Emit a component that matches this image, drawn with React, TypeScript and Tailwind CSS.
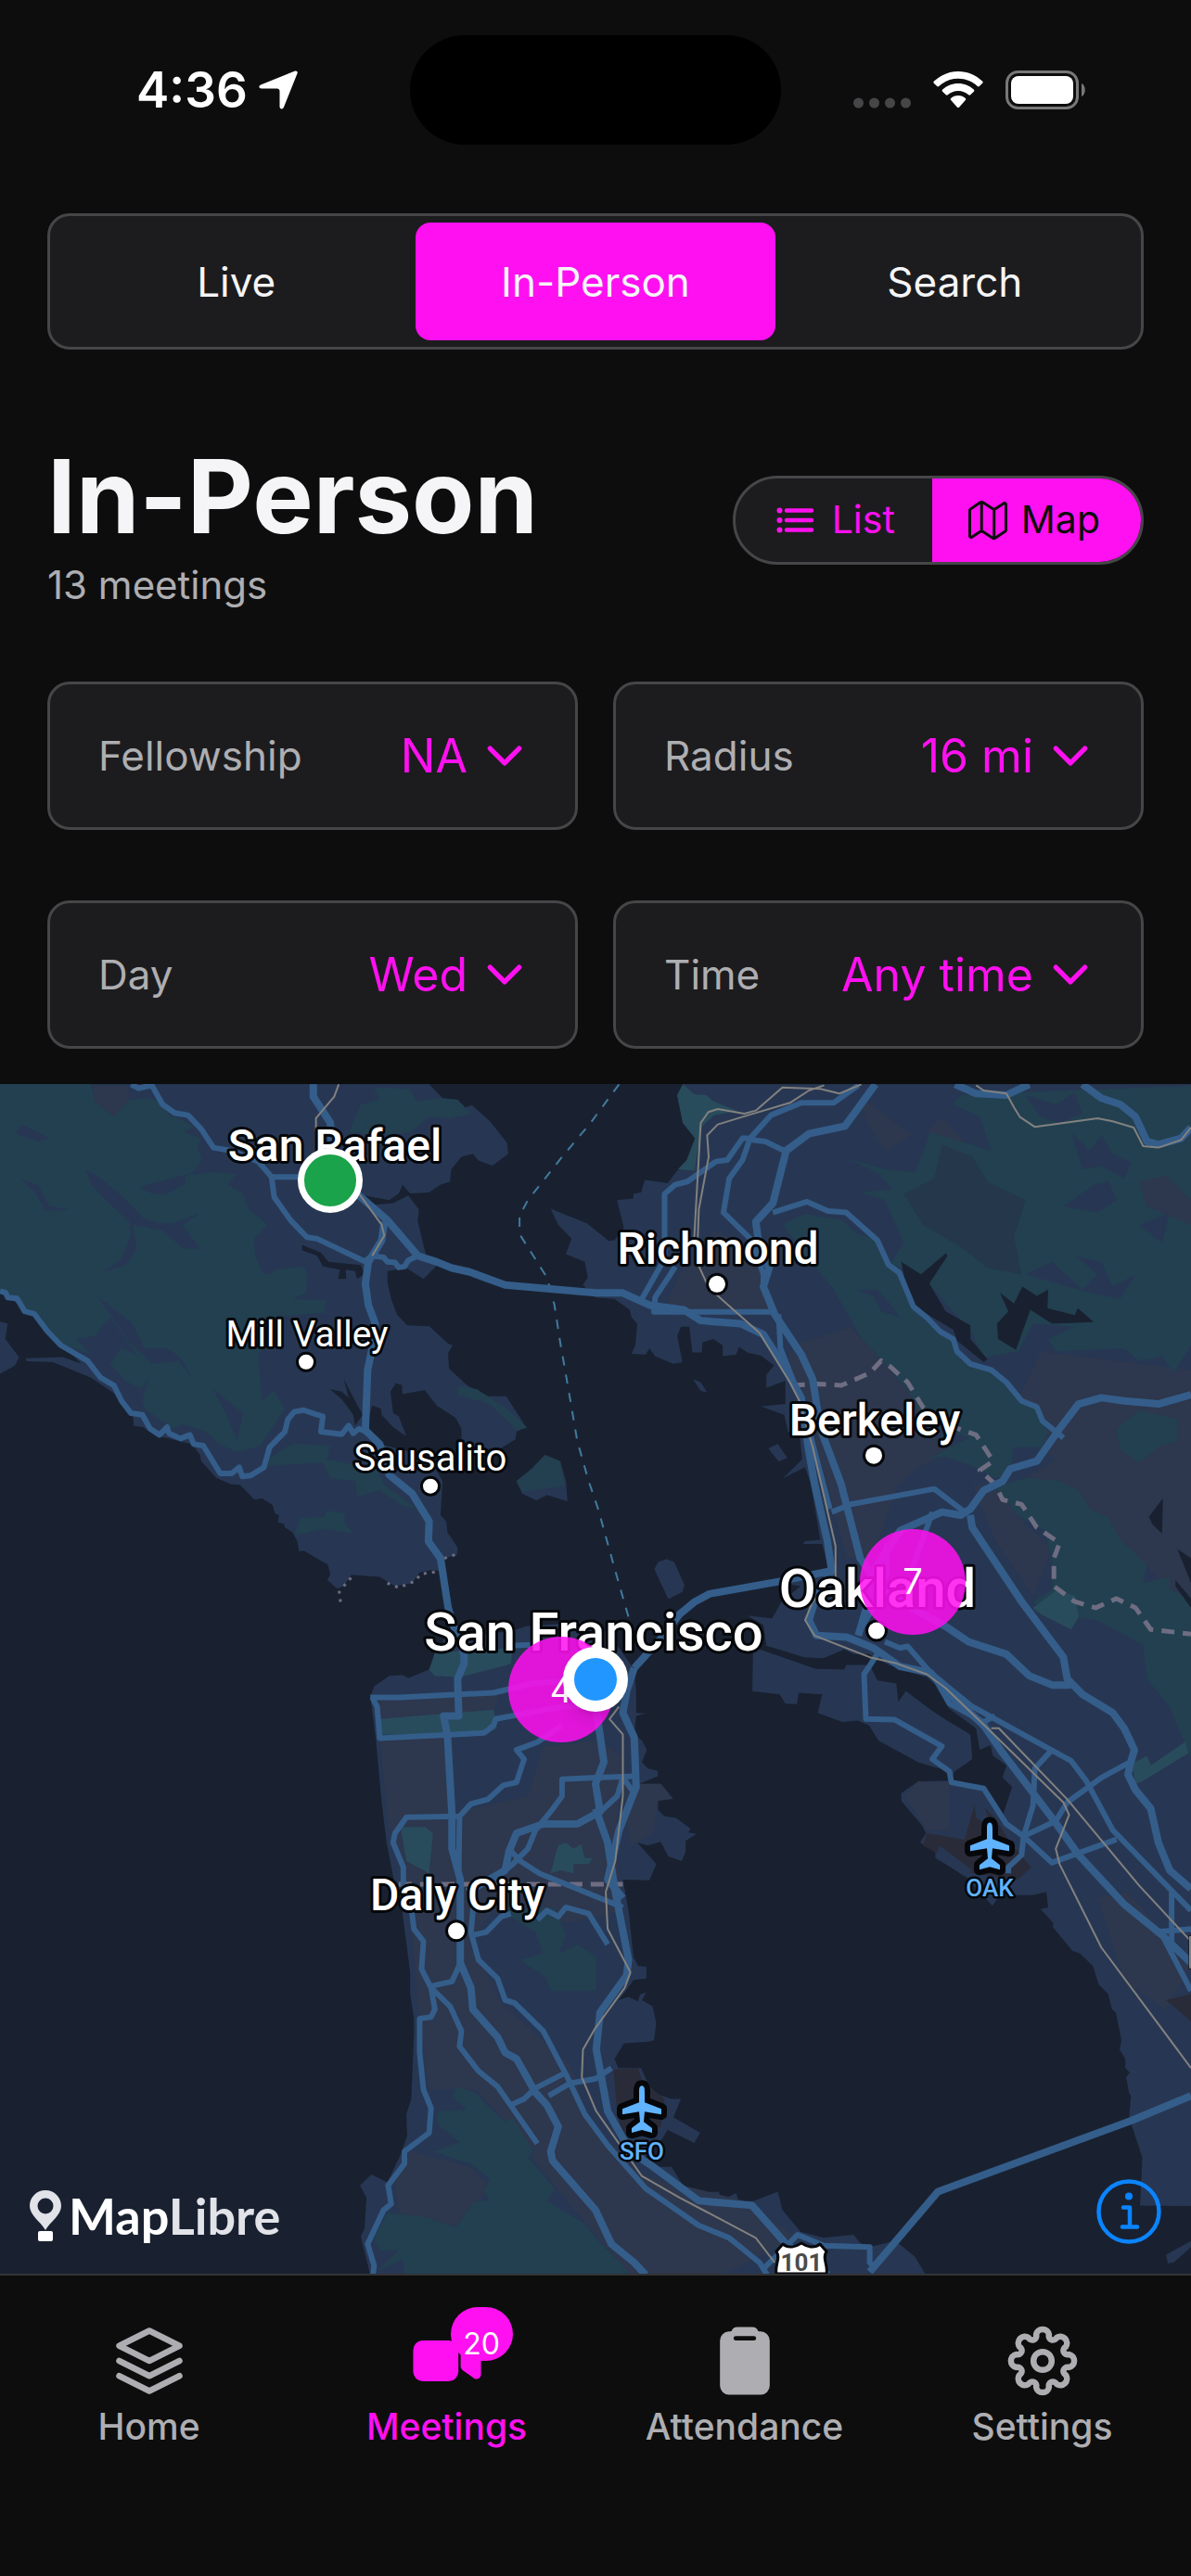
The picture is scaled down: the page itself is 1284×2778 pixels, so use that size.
import { useState } from 'react';
import { FiLayers } from 'react-icons/fi';
import { IoChevronDown, IoClipboard, IoList, IoMapOutline, IoVideocam } from 'react-icons/io5';

// map drawing units, labels and pins share them
const MAP_SIZE = 1284;

const LAND = [
  // Marin
  'M0 25H1130L1165 70L1205 75L1225 100L1242 92L1290 145L1335 215L1338 250L1297 288L1260 272L1245 250L1215 260L1188 300L1185 340L1160 350L1130 375L1080 378L1060 350L1050 378L1025 400L960 385L985 415L1035 410L1075 385L1103 430L1100 470L1122 580L1160 600L1115 655L1070 620L1020 630L1020 665L1030 720L1045 770L1072 805L1130 808L1180 865L1192 870L1180 895L1182 945L1230 1000L1285 1035L1333 1035L1385 1135L1360 1150L1357 1175L1310 1210L1215 1190L1215 1140L1200 1105L1150 1065L1118 1015L1060 1028L1058 998L1042 993L1028 1020L1035 1090L1050 1100L1070 1165L1035 1135L1005 1095L1003 1075L980 1065L965 1130L1000 1190L1130 1230L1165 1310L1160 1420L1175 1440L1178 1475L1205 1525L1203 1550L1165 1560L1160 1600L1135 1598L1105 1605L1085 1640L1040 1650L1000 1620L925 1613L905 1650L888 1658L862 1630L870 1612L863 1580L800 1535L787 1537L783 1505L770 1475L750 1460L748 1448L732 1443L735 1420L724 1415L718 1388L690 1365L670 1370L632 1322L610 1320L570 1300L530 1245L527 1225L505 1190L420 1165L375 1135L352 1130L350 1100L320 1060L300 1025L240 975L140 925L70 922L68 912L165 908L215 930L160 865L90 765L50 740L0 690Z',
  'M0 793L20 800L14 850L50 908L40 935L0 962Z',
  // Angel Island, Yerba Buena
  'M1360 1310L1400 1270L1435 1225L1475 1245L1490 1310L1494 1375L1440 1355L1412 1372L1375 1350Z',
  'M1723 1595L1733 1572L1755 1562L1775 1572L1802 1645L1797 1668L1760 1692Z',
  // East Bay
  'M1798 25L1783 60L1798 150L1830 200L1808 290L1783 305L1758 345L1698 335L1688 375L1668 380L1668 395L1625 400L1643 490L1618 530L1603 532L1545 475L1450 428L1470 480L1505 525L1490 575L1540 600L1548 650L1535 675L1568 715L1618 720L1658 755L1663 780L1678 800L1673 870L1663 898L1700 900L1710 880L1725 905L1773 930L1797 925L1783 840L1793 810L1815 810L1823 893L1848 893L1850 860L1878 850L1903 870L1903 905L1938 900L1946 875L1970 895L2003 903L2038 935L2018 965L2018 1008L2068 985L2068 1060L2004 1068L2065 1095L2075 1150L2105 1150L2112 1240L2062 1300L2120 1265L2135 1320L2160 1500L2118 1505L2115 1513L2165 1513L2180 1590L2058 1640L2108 1650L2058 1700L2033 1755L1968 1745L2010 1775L2018 1840L1983 1860L1981 1990L2053 2000L2068 2030L2098 2032L2103 1995L2165 2000L2153 2060L2218 2090L2258 2085L2288 2100L2313 2150L2418 2220L2500 2250L2500 2280L2418 2282L2373 2320L2373 2345L2428 2425L2438 2450L2423 2480L2463 2510L2463 2530L2543 2590L2613 2685L2633 2650L2718 2650L2755 2640L2760 2690L2740 2695L2773 2740L2773 2755L2823 2830L2845 2840L2878 2880L2893 2940L2918 2970L2928 3020L2938 3030L2953 3120L2948 3150L2963 3180L2963 3210L2975 3225L2965 3240L2973 3290L2978 3300L2973 3370L3008 3500L3002 3655L3136 3657V25Z',
  'M3070 3815L3136 3770V3790L3090 3840L3075 3842Z',
  'M1825 980L1845 990L1862 1022L1845 1018Z',
  'M2023 1203L2048 1190L2073 1235L2050 1246Z',
  // San Francisco and the peninsula
  'M975 2010L985 1975L1025 1940L1060 1938L1075 1948L1130 1920L1150 1865L1170 1820L1350 1795L1385 1780L1500 1770L1568 1760L1630 1850L1670 1920L1675 1990L1675 2060L1700 2062L1675 2070L1670 2130L1690 2150L1703 2180L1690 2220L1705 2240L1732 2248V2265L1683 2290H1740L1772 2338L1733 2345V2375L1750 2395L1780 2400L1818 2435L1813 2448L1834 2452L1805 2475V2510L1795 2540L1760 2525L1740 2478L1705 2490L1678 2480L1728 2550L1710 2602L1640 2600L1655 2700L1668 2850L1680 2880L1702 2882V2920L1668 2925L1648 2960L1628 2990L1655 2980L1680 2995L1685 2972L1702 2965L1690 2990L1718 3010L1728 3065L1722 3120L1708 3125L1643 3130L1618 3180L1628 3210L1688 3210L1695 3230L1718 3290L1768 3310L1793 3310L1773 3370L1843 3420L1828 3452L1758 3410L1743 3440L1698 3500L1718 3530L1768 3530L1798 3590L1818 3615L1893 3610L1898 3640L1938 3615L1945 3640L1985 3640L2048 3610L2060 3670L2108 3740L2168 3760L2248 3750L2263 3775L2288 3790L2358 3770L2408 3820L2438 3880H975L950 3755L960 3730L965 3630L948 3590L978 3555L1020 3580L1055 3490L1072 3430L1070 3360L1083 3310L1090 3100L1090 3050L1080 2970L1080 2900L1060 2710L1040 2620L1018 2480L1005 2350L990 2150L980 2050Z',
];

const PARKS = [
  'M0 25H240L250 80L300 125L340 75L400 70L445 95L440 120L512 160L485 180L528 200L520 230L532 270L510 310L365 358L440 380L485 350L490 320L560 310L622 315L600 350L640 380L655 430L705 480L668 525L670 570L690 635L715 640L725 625L800 615L810 640L805 700L770 720L860 725L855 765L740 775L720 840L680 900L690 1050L720 1015L750 1075L715 1140L685 1195L625 1215L575 1190L545 1150L480 1125L455 1140L385 1080L375 1050L395 960L360 900L290 780L250 840L200 850L240 900L160 865L90 765L50 740L0 690Z',
  'M290 930L320 880L360 900L400 965L370 1010L330 985Z',
  'M920 180L950 90L1000 75L985 35L1080 40L1095 80L1160 70L1205 75L1240 120L1180 135L1130 130L1080 180L1000 190Z',
  'M1205 1000L1255 1012L1340 1080L1388 1137L1360 1145L1290 1060L1205 1030Z',
  'M710 1235L770 1190L870 1195L860 1240L990 1270L1010 1320L1100 1400L1060 1390L1000 1340L940 1360L935 1310L870 1300L850 1250L705 1260Z',
  'M790 1430L855 1425L858 1405L910 1415L905 1440L932 1480L850 1465L775 1485Z',
  'M1360 1310L1400 1270L1435 1225L1475 1245L1485 1325L1375 1345Z',
  // Tilden and the hills
  'M2060 480L2120 445L2218 465L2258 510L2313 530L2335 605L2368 640L2395 740L2470 830L2510 855L2530 920L2620 950L2640 990L2725 1080L2760 1150L2748 1200L2670 1200L2660 1290L2620 1300L2560 1260L2488 1230L2440 1240L2550 1170L2430 1120L2393 1020L2323 920L2270 850L2195 690L2130 590Z',
  'M2228 265L2330 300L2410 310L2450 180L2610 240L2580 130L2510 90L2530 60L2700 50L3136 30V870L3090 960L3060 905L3000 920L2960 880L2780 890L2760 850L2830 810L2720 800L2680 890L2590 910L2560 830L2480 720L2430 650L2345 605L2380 540L2330 400L2265 375L2350 365L2310 310Z',
  'M2620 1330L2700 1300L2790 1310L2840 1340L2870 1400L2920 1430L2950 1500L3020 1580L3010 1640L3080 1620L3080 1660L3136 1690V2200L3120 2160L3080 2040L3020 1950L3010 1840L2890 1760L2760 1740L2720 1700L2770 1660L2770 1560L2750 1470L2680 1420Z',
  'M2940 1140L3000 1080L3100 1110L3100 1180L3050 1200L3000 1250L2950 1210Z',
  // peninsula
  'M1190 3300L1205 3270L1250 3290L1290 3340L1330 3385L1350 3370L1405 3480L1390 3500L1460 3600L1440 3640L1540 3715L1568 3760L1640 3850L1660 3880H1065L1060 3830L990 3870L1050 3800L1000 3800L985 3760L1020 3680L1110 3690L1200 3725L1250 3640L1290 3640L1275 3610L1290 3570L1240 3520L1090 3460L1145 3480L1210 3450L1150 3390L1155 3350L1230 3345Z',
  'M1320 2700L1460 2690L1490 2780L1470 2840L1520 2810L1570 2850V2960L1450 2960L1440 2920L1370 2860L1430 2840L1410 2770Z',
];

const PARKS_LIGHT = [
  'M1798 25L1828 58L1860 60L1878 80L1940 110L1880 125L1850 160L1835 250L1830 305L1785 300L1808 270L1830 200L1798 150L1783 60Z',
  'M1145 1865L1350 1850L1345 1902L1210 1945L1145 1940L1130 1920Z',
  'M1000 2080L1300 2050L1308 2110L1280 2130L1003 2130Z',
  'M1055 2430L1120 2430L1140 2450L1130 2580L1070 2540Z',
  'M1470 2490L1490 2480L1510 2500L1530 2485L1540 2530L1560 2530L1550 2550L1510 2550L1510 2580L1475 2570L1450 2580L1460 2530Z',
  'M2720 1720L2780 1665L2830 1680L2840 1750L2820 1790L2740 1740Z',
  'M2980 2225L3020 2200L3030 2230L3120 2155L3130 2190L3010 2280L2990 2290Z',
];

const URBAN = [
  'M2090 870L2240 810L2330 930L2400 1030L2440 1150L2520 1200L2400 1280L2360 1330L2300 1550L2230 1560L2170 1280L2120 1100L2060 950Z',
  'M1740 770L1800 620L1880 500L1960 540L2010 640L2030 770Z',
  'M2650 1130L2740 890L3136 950V1800L3040 1610L2940 1500L2850 1370L2700 1300L2780 1240Z',
  'M2260 60L2400 190L2330 240L2280 140Z',
  'M2480 130L2540 210L2520 220L2440 180Z',
  'M2560 1320L2620 1330L2700 1450L2770 1530L2720 1680L2620 1500Z',
  'M2380 2330L2418 2282L2500 2285L2500 2440L2440 2440Z',
  'M2890 2660L2970 2640L3136 2880L3070 3020L2960 2930Z',
  'M1000 2010L1320 1990L1300 2050L1000 2080Z',
  'M1000 2140L1190 2140L1200 2380L1390 2330L1430 2170L1568 2150L1640 2200L1620 2480L1640 2700L1500 2740L1300 2700L1240 2800L1320 3000L1500 3200L1560 3400L1700 3560L1960 3640L2100 3760L1900 3880H1660L1560 3740L1400 3500L1330 3380L1250 3280L1130 3280L1100 3000L1080 2700L1020 2400Z',
  'M1080 3480L1240 3530L1290 3600L1200 3720L1050 3680L1040 3580Z',
  'M1640 2290H1740L1772 2338L1733 2345L1720 2450L1660 2490Z',
];

const WATER = [
  'M795 545L845 570L865 600L950 610L960 640L940 655L935 630L910 625L912 655L890 655L895 625L850 615L835 580L795 562Z',
  'M868 1012L900 1020L918 1040L905 978L935 1050L955 1095L935 1130L930 1095L900 1045Z',
  'M1983 1860L1985 1848L2148 1918L2223 1920L2228 1905L2290 1905L2310 1955L2360 1965L2365 2025L2385 1990L2450 2050L2500 2090L2555 2130L2560 2210L2513 2250L2503 2285L2568 2295L2600 2330L2640 2395L2665 2300L2640 2270L2650 2230L2615 2200L2608 2165L2580 2180L2570 2110L2498 2045L2465 1970L2440 1945L2340 1905L2288 1870L2248 1870L2223 1855L2168 1883L2118 1880L1998 1835Z',
  'M2373 600L2425 640L2490 573L2495 580L2447 670L2490 760L2555 805L2555 850L2600 915L2590 925L2520 855L2510 820L2395 735Z',
  'M2633 700L2670 735L2692 680L2730 710L2760 690L2758 750L2830 772L2838 750L2880 795L2770 800L2713 755L2675 885L2628 850L2625 800L2655 760Z',
  'M3062 1365L3025 1425L3035 1450L3060 1480ZM3100 1530L3136 1560V1640L3120 1590ZM3095 1630L3136 1690V1720L3095 1650Z',
];

const AIRFIELD = [
  'M2570 2340L2620 2400L2660 2480L2715 2560L2680 2600L2560 2580L2430 2490L2440 2450L2540 2470Z',
  'M1615 3215L1680 3210L1690 3250L1750 3310L1740 3400L1640 3440L1625 3350Z',
  'M3070 2990L3136 2970V3060L3090 3010Z',
];

const HIGHWAYS = [
  'M825 25L825 65L870 150L875 260L945 385L1020 465L1100 580L1150 600L1190 620L1235 632L1330 675L1568 700H1638L1710 740L1800 755L1845 790L1950 800L2010 835L2060 930L2110 1040L2128 1200L2145 1320L2178 1500L2190 1600',
  'M1012 470L1005 530L970 600L962 670L970 740L988 800L980 880L968 950L962 1145L1000 1190L1025 1290L1085 1350L1130 1440L1128 1505L1160 1560L1180 1720L1200 1800L1222 1870V1900L1205 1950L1208 2070H1168L1178 2130L1190 2390V2500L1212 2600L1212 2870L1240 2950L1245 3020L1310 3110L1330 3160L1360 3180L1410 3290L1440 3330L1470 3400L1450 3480L1455 3510L1568 3670L1610 3780L1670 3840L1700 3880',
  'M2305 25L2225 160L2130 185L2070 240L2035 410L1990 470L2000 560L2025 620L2010 680L2040 770L2110 900L2140 980L2160 1140L2215 1320L2265 1560L2300 1620',
  'M2515 25L2570 55L2650 60L2710 25',
  'M2850 25L2900 70L2950 90L2990 130L3020 210L3050 220L3110 200L3136 165',
  'M3136 1030L3050 1060L2960 1050L2900 1040L2840 1060L2790 1140L2730 1245L2660 1270L2640 1310L2590 1340L2555 1400L2530 1420L2480 1410L2370 1470L2300 1600',
  'M2555 1420L2560 1460L2690 1700L2800 1880L2810 1950L2850 2000L2930 2060L2960 2110L2987 2180L2975 2230L2970 2260L2990 2310L3030 2370L3050 2480L3080 2570L3136 2630',
  'M1670 1915L1740 1820L1790 1740L1830 1700L1868 1675L2050 1635L2190 1600L2150 1680L2130 1760L2150 1810L2230 1815L2300 1850L2370 1910L2450 1930L2500 2000L2590 2100L2640 2190L2770 2400L2840 2520L2960 2680L3060 2780L3136 2870',
  'M2260 1810L2300 1640L2400 1720L2490 1780L2550 1830L2650 1870L2710 1940L2770 1970H2820',
  'M1670 1915L1650 1990L1640 2060L1670 2140L1675 2300L1630 2440L1600 2600L1640 2660',
  'M1500 2000L1568 2030L1590 2220L1568 2290L1580 2380L1520 2420L1430 2420L1360 2450L1340 2510L1330 2570L1260 2620L1230 2640',
  'M1568 2370L1600 2480L1620 2640L1655 2860L1650 2910L1580 3030L1570 3150L1600 3350L1660 3480L1720 3530L1840 3640L1980 3655L2070 3780L2180 3880',
  'M3136 3300L2980 3380L2470 3610L2290 3870',
];

const ROADS = [
  'M345 25L365 38L400 28L412 55L428 90L460 118L495 125L530 170L562 230L610 240L680 275L715 325L722 390L765 465L808 520L835 525L960 598L980 580L1010 585L1020 600L1040 602L1050 618L1065 615L1075 595L1100 580',
  'M715 325H790',
  'M0 695L15 700L20 715L45 718L65 760L90 768L125 825L160 870L230 920L265 975L300 1000L320 1050L345 1090L375 1095L395 1140L420 1160L440 1135L445 1155L475 1172L500 1160L510 1190L535 1195L580 1285L610 1285L630 1265L638 1295L660 1292L695 1265L710 1200L750 1150L758 1110L775 1085L800 1080L835 1095L850 1100L845 1150L900 1158L918 1130L930 1155L945 1140L965 1150',
  'M2260 28L2195 85L2110 85L2030 125L1975 200L1955 270L1920 330L1905 440L1980 530L2010 640L2010 690',
  'M1980 205L2015 210L2065 240L2130 185',
  'M1970 200L1955 200L1915 270L1885 275L1810 340L1778 350L1750 380L1750 590L1690 720',
  'M1778 615L1760 650L1725 715L1722 762H2040',
  'M2035 440L2125 405L2180 435L2228 440L2310 530L2340 610L2368 635L2405 745L2440 780L2475 825L2510 850L2520 890L2555 930L2610 950L2650 990L2690 1050L2730 1070L2745 1115L2800 1170',
  'M2050 770L2055 880L2110 1050L2185 1400',
  'M2190 1410L2240 1385L2460 1335L2540 1410',
  'M2335 1510L2335 1610L2300 1720L2260 1800',
  'M2455 1410L2400 1600',
  'M2310 1870L2275 1935L2280 2080L2355 2082L2480 2168L2455 2210L2500 2250L2505 2285L2590 2305L2650 2420L2695 2460L2690 2520L2655 2560V2580',
  'M2330 1830L2370 1850L2390 1845L2450 1930L2560 2040L2820 2215L2860 2280L2930 2440L3136 2700',
  'M2770 2180L2725 2240L2720 2360L2695 2460L2770 2545L2940 2470',
  'M2695 2460L2780 2410L2810 2350L2900 2270L2975 2220',
  'M2465 1955L2500 2030L2590 2090M2590 2090L2620 2070M3085 2640V2800M3040 2770L3136 2760M3060 2780L3136 2960',
  'M1355 1842L1400 1840M975 2010L1055 2010L1300 1995L1400 1965L1568 1950M980 2010L993 2040L1000 2142L1275 2125L1300 2100L1305 2080L1480 2040L1600 2040',
  'M1480 2100L1415 2155L1360 2180L1380 2210L1360 2285L1325 2295L1285 2340L1240 2355L1210 2395L1070 2398L1040 2450L1035 2480L1062 2560V2640L1085 2710L1090 2760L1115 2800L1110 2890L1135 2950L1145 3020L1135 3045L1105 3050L1105 3160L1115 3280L1135 3340L1130 3420L1065 3480V3520L1022 3590L1030 3650L1010 3670L968 3780L985 3850L982 3880',
  'M1210 2395L1208 2570M1340 2500L1370 2540L1420 2580L1500 2620L1640 2690M1300 2600L1350 2550L1390 2500L1410 2440L1450 2380L1480 2330V2275L1568 2270L1675 2265',
  'M1568 2395L1625 2330L1640 2270L1670 2320',
  'M1250 2640L1240 2770L1260 2860L1310 2920L1330 2990L1355 3000L1430 3090L1490 3230L1540 3360L1600 3460L1700 3600L1840 3720L1920 3760L2000 3840L2020 3880',
  'M1245 2780L1280 2770L1320 2720L1345 2710M1415 2730L1440 2700L1470 2720L1490 2690L1550 2710L1600 2810',
  'M1135 2950L1185 3010L1215 3090L1210 3140L1260 3220L1310 3270L1415 3455M1345 3330L1380 3310L1410 3275L1490 3225M1445 3300L1500 3260L1568 3245L1610 3210M1135 2945L1190 2930L1212 2870',
  'M2010 3860L2060 3800L2100 3750L2170 3785L2290 3790V3840L2305 3860',
];

const RAILS = [
  'M892 25L880 65L832 135V175L910 320L1005 480L1012 515L980 580',
  'M2570 28L2590 45L2650 55L2670 100L2685 130L2725 163L2890 135L2930 145L2985 165L3010 225L3050 230L3110 205L3136 165',
  'M2268 25L2210 55L2160 40L2060 35L1990 110L1960 120L1890 105L1865 115L1845 150L1828 520',
  'M2170 28L2130 45L2080 85L1970 125L1890 155L1862 190L1866 260L1840 430L1835 600L1865 680L1895 715L2000 830L2080 990L2105 1050L2140 1200L2200 1520L2200 1620L2140 1700L2120 1760L2145 1810L2290 1880L2360 1900L2440 1935L2490 1980L2600 2110L2800 2350L2815 2390L2780 2500L2790 2550L2900 2820L3136 3210',
  'M2610 2110L2630 2110L2810 2340L3000 2620L3136 2800',
  'M1630 2040L1605 2080L1640 2130L1640 2330L1620 2540L1595 2640L1600 2760L1660 2900L1645 2950L1568 3080L1535 3150L1532 3240L1570 3350L1690 3560L1790 3630L1990 3760L2040 3840',
];

const BORDERS = [
  'M2085 1000L2150 995L2215 1000L2290 960L2320 920L2345 940L2390 990L2430 1070L2500 1130L2570 1160L2615 1245L2580 1275L2620 1320L2640 1370L2690 1385L2730 1460L2790 1510L2775 1560V1650L2830 1700L2885 1720L2940 1690L2990 1720L3030 1790L3136 1805',
  'M1050 2615H1640',
];

// bits of boundary along the Marin headlands
const SHORE_BORDERS = ['M893 1665L897 1705M905 1650L925 1622M1020 1640L1050 1655L1090 1635L1110 1610L1150 1603M1170 1560L1205 1545'];

const CITIES = [
  { name: 'San Rafael', x: 361, y: 83, size: 48, weight: 500 },
  { name: 'Richmond', x: 774, y: 194, size: 48, weight: 500, dot: [773, 216, 9] },
  { name: 'Mill Valley', x: 331, y: 283, size: 39, weight: 400, dot: [330, 300, 8] },
  { name: 'Sausalito', x: 464, y: 417, size: 40, weight: 400, dot: [464, 434, 8] },
  { name: 'Berkeley', x: 943, y: 379, size: 48, weight: 500, dot: [942, 401, 9] },
  { name: 'Oakland', x: 946, y: 564, size: 58, weight: 500, dot: [945, 590, 9] },
  { name: 'San Francisco', x: 640, y: 611, size: 58, weight: 500 },
  { name: 'Daly City', x: 493, y: 892, size: 48, weight: 500, dot: [492, 914, 9] },
];

const AIRPORTS = [
  { code: 'OAK', x: 1067, y: 823 },
  { code: 'SFO', x: 692, y: 1107 },
];

const PLANE =
  'M0 -26C3 -26 3 -22 3 -19V-8L21 -1V5L3 2L2 13L11 20V25L0 22L-11 25V20L-2 13L-3 2L-21 5V-1L-3 -8V-19C-3 -22 -3 -26 0 -26Z';

type Filter = { id: string; label: string; options: string[] };

const FILTERS: Filter[] = [
  { id: 'fellowship', label: 'Fellowship', options: ['NA', 'AA'] },
  { id: 'radius', label: 'Radius', options: ['16 mi', '32 mi'] },
  { id: 'day', label: 'Day', options: ['Wed', 'Thu'] },
  { id: 'time', label: 'Time', options: ['Any time', 'Morning'] },
];

const MODES = ['Live', 'In-Person', 'Search'];

function Shapes({ paths, className }: { paths: string[]; className: string }) {
  return (
    <g className={className}>
      {paths.map((d) => (
        <path key={d} d={d} vectorEffect="non-scaling-stroke" />
      ))}
    </g>
  );
}

function polar(deg: number, r: number) {
  const a = (deg * Math.PI) / 180;
  return `${(39 + r * Math.cos(a)).toFixed(2)} ${(39 + r * Math.sin(a)).toFixed(2)}`;
}

// eight round teeth joined by round valleys
const GEAR =
  `M${polar(-13.8, 29)}` +
  [0, 45, 90, 135, 180, 225, 270, 315]
    .map((a) => `A7 7 0 0 1 ${polar(a + 13.8, 29)}A4.4 4.4 0 0 0 ${polar(a + 31.2, 29)}`)
    .join('') +
  'Z';

function GearIcon() {
  return (
    <svg viewBox="0 0 78 78" className="size-[78px]" fill="none" stroke="currentColor" strokeWidth="6.500" strokeLinejoin="round" aria-hidden>
      <path d={GEAR} />
      <circle cx="39" cy="39" r="9.800" />
    </svg>
  );
}

function BayMap() {
  return (
    <svg viewBox="0 0 1284 1284" preserveAspectRatio="none" className="absolute inset-0 w-full h-full" aria-hidden>
      {/* traced in a 3136 x 3852 grid */}
      <g transform="matrix(0.40944 0 0 0.33333 0 -8)" strokeLinejoin="round" strokeLinecap="butt">
        <Shapes paths={LAND} className="fill-[#273753]" />
        <Shapes paths={URBAN} className="fill-[#2d374d]" />
        <Shapes paths={PARKS} className="fill-[#224050]" />
        <Shapes paths={PARKS_LIGHT} className="fill-[#294c5c]" />
        <g className="fill-[#273753]">
          <path d="M225 300L265 330L320 385L380 460L420 475L455 475L530 440L480 480L530 560L480 555L430 500L350 480L360 560L330 610L270 635L320 590L345 510L340 470L270 390L240 350Z" />
          <path d="M40 180L60 155L130 200L100 210L50 190ZM100 350L130 420L190 430L120 435L95 380L0 265L60 335ZM255 710L350 800L380 880L440 880L475 910L510 980L470 920L400 930L340 860Z" />
          <path d="M560 1010L640 1090L625 1180L590 1080ZM370 365L470 345L440 380L400 378Z" />
          <path d="M2210 640L2260 690L2310 690L2340 730L2370 780L2320 760L2300 710L2270 700Z" />
          <path d="M2820 180L2870 240L2900 190L2930 250L2980 280L2960 330L2900 290L2850 300ZM2700 640L2770 600L2850 690L2890 640L2830 580L2900 600L2930 680L2990 640L2950 720L2870 700Z" />
          <path d="M2700 60L2780 90L2830 50L2850 120L2790 150L2740 130ZM2880 350L2920 340L2940 400L2890 440L2800 420ZM3000 480L3080 440L3060 540Z" />
        </g>
        <path className="fill-[#24374b]" d="M2380 380L2460 330L2480 220L2560 260L2600 340L2700 400L2670 520L2690 640L2600 620L2540 560L2430 480Z" />
        <path className="fill-[#2d374d]" d="M245 30H330L345 70L300 130L250 80ZM3000 340L3070 320L3136 400V480L3020 420Z" />
        <Shapes paths={WATER} className="fill-[#192130]" />
        <Shapes paths={AIRFIELD} className="fill-[#2a2b38]" />
        <path className="fill-[#273753]" d="M1745 3370L1773 3370L1843 3420L1828 3452L1758 3410ZM2475 2490L2560 2570L2540 2590L2463 2525ZM2565 2340L2585 2340L2610 2430L2570 2400Z" />
        <Shapes paths={BORDERS} className="fill-none stroke-[#6e6d82] stroke-[5px] [stroke-dasharray:14_9]" />
        <Shapes paths={SHORE_BORDERS} className="fill-none stroke-[#6e6d82] stroke-[3px] [stroke-dasharray:3_6]" />
        <path
          d="M1630 25L1555 150L1480 260L1390 400L1368 450L1368 510L1440 650L1460 740L1475 860L1495 1000L1520 1180L1550 1310L1575 1400L1620 1600L1655 1750"
          vectorEffect="non-scaling-stroke"
          className="fill-none stroke-[#427a9f] stroke-2 [stroke-dasharray:10_10]"
        />
        <Shapes paths={ROADS} className="fill-none stroke-[#345d8a] stroke-[6px]" />
        <Shapes paths={HIGHWAYS} className="fill-none stroke-[#345d8a] stroke-[8px]" />
        <Shapes paths={RAILS} className="fill-none stroke-[#82817f] stroke-2" />
      </g>

      <g textAnchor="middle" className="font-[Roboto,sans-serif]" strokeLinejoin="round">
        {CITIES.map((c) => (
          <g key={c.name} fill="white" stroke="#05070a" strokeWidth="6" paintOrder="stroke">
            {c.dot && <circle cx={c.dot[0]} cy={c.dot[1]} r={c.dot[2]} />}
            <text x={c.x} y={c.y} fontSize={c.size} fontWeight={c.weight}>
              {c.name}
            </text>
          </g>
        ))}
        {AIRPORTS.map((a) => (
          <g key={a.code} transform={`translate(${a.x} ${a.y})`} fill="#60b3ff" stroke="#05070a" paintOrder="stroke">
            <path d={PLANE} strokeWidth="12" />
            <text y="54" fontSize="26" fontWeight="500" strokeWidth="5">
              {a.code}
            </text>
          </g>
        ))}
        <path
          d="M844 1252C850 1257 858 1255 864 1251C870 1255 878 1257 884 1252L891 1260C886 1268 893 1274 891 1284H837C835 1274 842 1268 837 1260Z"
          fill="white"
          stroke="#05070a"
          strokeWidth="3"
        />
        <text x="864" y="1281" fontSize="26" fontWeight="700" fill="#4b4b4b">
          101
        </text>
        <path d="M1282 919H1284V955H1282Z" fill="white" stroke="#05070a" strokeWidth="1" />
      </g>
    </svg>
  );
}

function Pin({ x, y, label, className, children }: { x: number; y: number; label: string; className: string; children?: string }) {
  return (
    <button
      aria-label={label}
      className={`absolute -translate-1/2 rounded-full ${className}`}
      style={{ left: `${(x / MAP_SIZE) * 100}%`, top: `${(y / MAP_SIZE) * 100}%` }}
    >
      {children}
    </button>
  );
}

function StatusBar() {
  return (
    <div className="grid grid-cols-[1fr_400px_1fr] items-center pt-[38px]">
      <div className="flex items-center gap-3 pl-[147px] text-white">
        <span className="text-[53px] leading-[60px] font-semibold">4:36</span>
        <svg width="42" height="42" viewBox="0 0 42 42" aria-hidden>
          <path d="M38.500 .8C40.800-.4 42.400 1.200 41.400 3.500L27 39.500C26 42.300 22.500 42 22.500 39V22.500Q22.500 19.500 19.500 19.500H3C0 19.500-.5 16.500 2 15.500Z" fill="white" />
        </svg>
      </div>
      <div className="h-[118px] rounded-full bg-black" />
      <div className="flex items-center justify-end gap-6 pr-28">
        <svg width="62" height="42" viewBox="0 0 62 42" fill="#464648" aria-hidden>
          <circle cx="5.500" cy="35" r="5.500" />
          <circle cx="22.500" cy="35" r="5.500" />
          <circle cx="39.500" cy="35" r="5.500" />
          <circle cx="56.500" cy="35" r="5.500" />
        </svg>
        <svg width="54" height="40" viewBox="0 0 54 40" fill="white" aria-hidden>
          <path d="M27 0C37 0 46 4 53 10.500C53.800 11.300 53.800 12 53.200 12.700L49.800 16C49.200 16.600 48.400 16.600 47.800 16C42.200 10.800 35 7.800 27 7.800S11.800 10.800 6.200 16C5.600 16.600 4.800 16.600 4.200 16L.8 12.700C.2 12 .2 11.300 1 10.500C8 4 17 0 27 0Z" />
          <path d="M27 13C33.600 13 39.400 15.500 43.800 19.600C44.500 20.300 44.500 21 43.900 21.700L40.200 25.300C39.600 25.900 38.900 25.900 38.200 25.300C35.200 22.600 31.300 21 27 21S18.800 22.600 15.800 25.300C15.100 25.900 14.400 25.900 13.800 25.300L10.100 21.700C9.500 21 9.500 20.300 10.200 19.600C14.600 15.500 20.400 13 27 13Z" />
          <path d="M27 26C30.200 26 32.800 27.100 34.800 28.900C35.500 29.600 35.500 30.300 34.800 31L28.200 38.500C27.500 39.300 26.500 39.300 25.800 38.500L19.200 31C18.500 30.300 18.500 29.600 19.200 28.900C21.200 27.100 23.800 26 27 26Z" />
        </svg>
        <svg width="88" height="42" viewBox="0 0 88 42" aria-hidden>
          <rect x="1.500" y="1.500" width="76" height="39" rx="12" fill="none" stroke="#78787a" strokeWidth="3" />
          <rect x="6" y="6" width="67" height="30" rx="8" fill="white" />
          <path d="M82 14C87 16 87 26 82 28Z" fill="#78787a" />
        </svg>
      </div>
    </div>
  );
}

function FilterCard({ filter }: { filter: Filter }) {
  const [value, setValue] = useState(filter.options[0]);
  return (
    <div className="flex items-center justify-between h-40 pl-[52px] pr-12 rounded-3xl border-[3px] border-[#464648] bg-[#1c1c1e]">
      <label htmlFor={filter.id} className="text-[44px] text-[#aeaeb2]">
        {filter.label}
      </label>
      <div className="flex items-center gap-3 text-[#ff10f0]">
        <select
          id={filter.id}
          value={value}
          onChange={(e) => setValue(e.target.value)}
          className="appearance-none field-sizing-content bg-transparent text-[50px] leading-[60px]"
        >
          {filter.options.map((o) => (
            <option key={o}>{o}</option>
          ))}
        </select>
        <IoChevronDown className="size-14 pointer-events-none" aria-hidden />
      </div>
    </div>
  );
}

export default function App() {
  const [mode, setMode] = useState('In-Person');

  return (
    <div className="min-h-screen flex flex-col bg-[#0d0d0d] font-[Inter,'Liberation_Sans',sans-serif]">
      <StatusBar />

      <main className="flex-1 flex flex-col">
        <div className="px-[51px] pt-[74px]">
          <div className="grid grid-cols-3 h-[147px] p-[7px] rounded-3xl border-[3px] border-[#464648] bg-[#1c1c1e]">
            {MODES.map((m) => (
              <button
                key={m}
                onClick={() => setMode(m)}
                className={`rounded-2xl text-[44px] text-[#f5f5f7] ${m === mode ? 'bg-[#ff10f0]' : ''}`}
              >
                {m}
              </button>
            ))}
          </div>

          <div className="flex justify-between pt-24">
            <div>
              <h1 className="text-[110px] leading-[124px] font-bold text-[#f5f5f7]">In-Person</h1>
              <p className="text-[42px] leading-[68px] text-[#aeaeb2]">13 meetings</p>
            </div>
            <div className="flex h-24 mt-10 rounded-full border-[3px] border-[#464648] bg-[#1c1c1e] overflow-hidden text-[41px]">
              <button className="flex items-center gap-4 px-10 text-[#ff10f0]">
                <IoList className="size-12" aria-hidden />
                List
              </button>
              <button className="flex items-center gap-3 pl-9 pr-11 bg-[#ff10f0] text-[#0d0d0d]">
                <IoMapOutline className="size-12" aria-hidden />
                Map
              </button>
            </div>
          </div>

          <div className="grid grid-cols-2 gap-x-[38px] gap-y-19 pt-[70px] pb-[38px]">
            {FILTERS.map((f) => (
              <FilterCard key={f.id} filter={f} />
            ))}
          </div>
        </div>

        <section aria-label="Map" className="relative flex-1 min-h-[600px] overflow-hidden bg-[#192130]">
          <BayMap />
          <Pin x={356} y={104} label="San Rafael meeting" className="size-[70px] border-[7px] border-white bg-[#1aa34a]" />
          <Pin x={984} y={537} label="7 meetings" className="size-[114px] bg-[#ff10f0]/86 text-[38px] text-white">
            7
          </Pin>
          <Pin x={605} y={654} label="4 meetings" className="size-[114px] bg-[#ff10f0]/86 text-[38px] text-white">
            4
          </Pin>
          <Pin x={642} y={643} label="Your location" className="size-[70px] border-[12px] border-white bg-[#2196ff] shadow-lg" />

          <div className="absolute left-8 bottom-8 flex items-center gap-2 font-[Lato,sans-serif] text-[54px] leading-[60px] font-bold text-white">
            <svg width="34" height="56" viewBox="0 0 34 56" aria-hidden>
              <path
                fillRule="evenodd"
                fill="#e1e3e9"
                d="M17 0C26.500 0 34 7.500 34 17C34 27 22 34 17 43C12 34 0 27 0 17C0 7.500 7.500 0 17 0ZM17 8.500A8.500 8.500 0 1 0 17 25.500A8.500 8.500 0 1 0 17 8.500Z"
              />
              <rect x="9" y="44" width="16" height="11" rx="2" fill="white" />
            </svg>
            <span>
              Map<span className="text-[#e1e3e9]">Libre</span>
            </span>
          </div>

          <button aria-label="About this map" className="absolute right-8 bottom-8 text-[#0a84ff]">
            <svg width="70" height="70" viewBox="0 0 70 70" fill="none" stroke="currentColor" aria-hidden>
              <circle cx="35" cy="35" r="32.500" strokeWidth="4.500" />
              <circle cx="35" cy="18.500" r="4" fill="currentColor" stroke="none" />
              <path d="M29 30.500H36V51.500M28 51.500H44" strokeWidth="4.500" strokeLinecap="round" strokeLinejoin="round" />
            </svg>
          </button>
        </section>
      </main>

      <nav className="grid grid-cols-4 h-[326px] pt-[53px] items-start border-t-2 border-[#333336] text-[39px] leading-[48px] font-medium text-[#aeaeb2]">
        <a href="#home" className="flex flex-col items-center gap-2">
          <FiLayers className="size-[78px]" aria-hidden />
          Home
        </a>
        <a href="#meetings" className="relative flex flex-col items-center gap-2 text-[#ff10f0]">
          <IoVideocam className="size-[78px]" aria-hidden />
          <span className="absolute left-1/2 bottom-[95px] ml-1 w-[67px] h-[58px] pt-4 rounded-full bg-[#ff10f0] text-center text-[32px] leading-[48px] font-normal text-white">
            20
          </span>
          Meetings
        </a>
        <a href="#attendance" className="flex flex-col items-center gap-2">
          <IoClipboard className="size-[78px]" aria-hidden />
          Attendance
        </a>
        <a href="#settings" className="flex flex-col items-center gap-2">
          <GearIcon />
          Settings
        </a>
      </nav>
    </div>
  );
}
